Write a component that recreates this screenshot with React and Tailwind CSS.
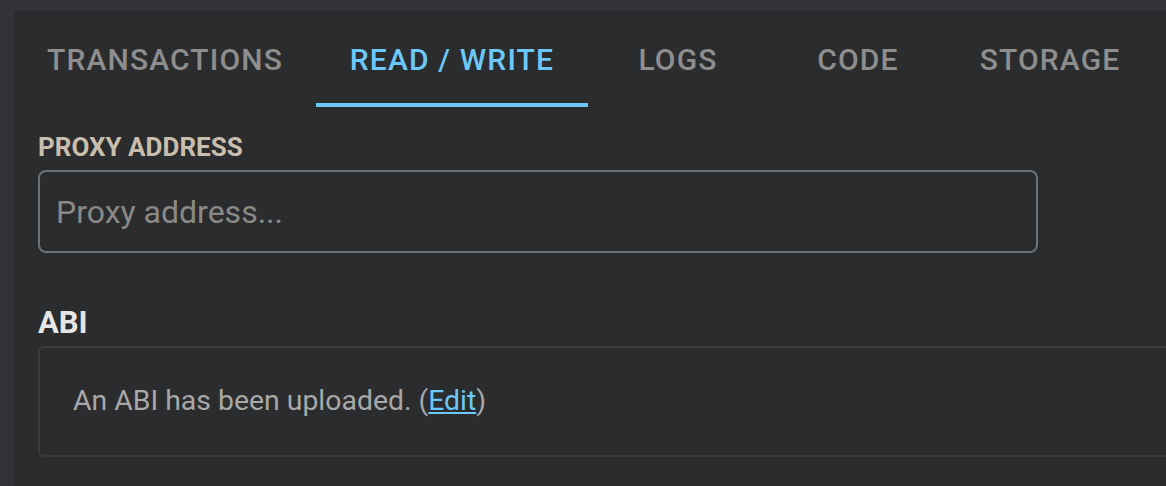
import React from "react";

const tabs = [
  { label: "TRANSACTIONS", w: "w-[302px]" },
  { label: "READ / WRITE", w: "w-[272px]" },
  { label: "LOGS", w: "w-[180px]" },
  { label: "CODE", w: "w-[180px]" },
  { label: "STORAGE", w: "w-[204px]" },
];

export default function App() {
  return (
    <div
      className="w-full h-[486px] bg-[#323336] pt-[11px] pl-[14px] overflow-hidden"
      style={{ fontFamily: "Roboto, 'Noto Sans', sans-serif" }}
    >
      <div className="h-full bg-[#2b2c2e]">
        <div className="flex h-[96px]">
          {tabs.map((t, i) => {
            const active = i === 1;
            return (
              <div
                key={t.label}
                className={
                  "relative flex shrink-0 items-center justify-center text-[30px] font-medium tracking-[1.15px] whitespace-nowrap " +
                  t.w +
                  " " +
                  (active ? "text-[#6cc8f8]" : "text-[#8e8e8e]")
                }
              >
                {t.label}
                {active && (
                  <span className="absolute left-0 right-0 bottom-0 h-[4px] bg-[#6cc8f8]" />
                )}
              </div>
            );
          })}
        </div>
        <div className="pl-[24px]">
          <div className="mt-[24px] text-[26px] leading-[32px] font-bold text-[#c9bead]">
            PROXY ADDRESS
          </div>
          <input
            className="mt-[7px] block h-[83px] w-[1000px] border-2 border-[#6b7378] rounded-[8px] bg-transparent px-[16px] text-[32px] text-[#dddddd] placeholder:text-[#8a8985] outline-none"
            placeholder="Proxy address..."
          />
          <div className="mt-[52px] text-[31px] leading-[36px] font-bold text-[#e6e6e6]">
            ABI
          </div>
          <div className="mt-[5px] h-[111px] w-[1160px] border-2 border-[#3a3b3d] rounded-[6px] flex items-center pl-[33px] text-[28.4px] text-[#a8a8a8]">
            <span>
              An ABI has been uploaded. (
              <a href="#" className="text-[#6cc8f8] underline">
                Edit
              </a>
              )
            </span>
          </div>
        </div>
      </div>
    </div>
  );
}
